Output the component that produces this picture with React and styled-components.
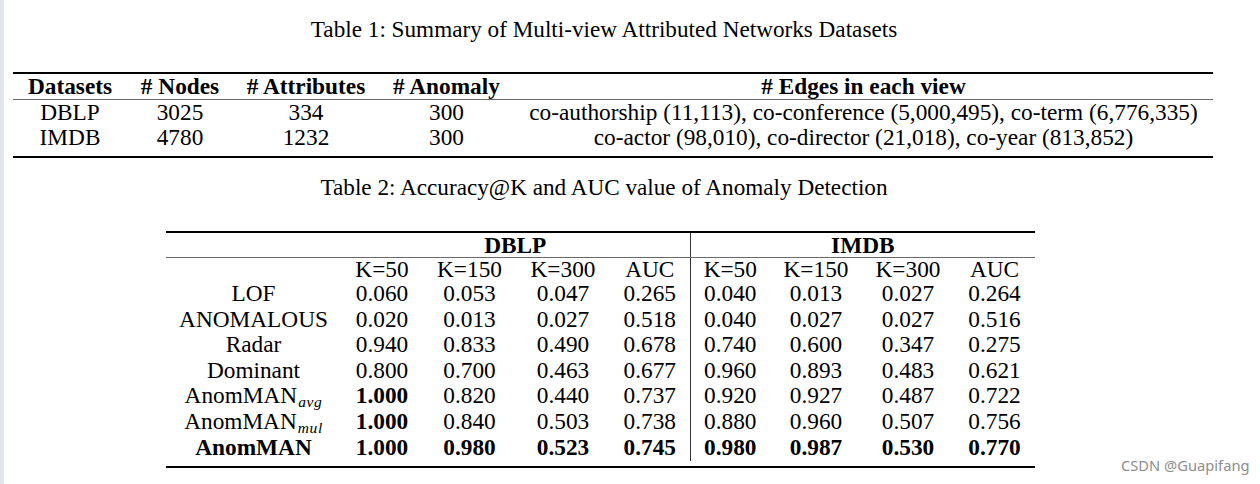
import React from "react";
import styled, { createGlobalStyle } from "styled-components";

const Global = createGlobalStyle`
  html, body { margin: 0; padding: 0; background: #ffffff; }
  body { width: 1260px; height: 484px; overflow: hidden; }
`;

const Page = styled.div`
  position: relative;
  box-sizing: border-box;
  width: 1260px;
  height: 484px;
  border-left: 4px solid #e4e6ed;
  display: flex;
  flex-direction: column;
  font-family: "Liberation Serif", "Times New Roman", serif;
  color: #000;
`;

const Caption = styled.div`
  width: 1200px;
  text-align: center;
  font-size: 23.2px;
  line-height: 24px;
  margin-top: ${(p) => p.$top}px;
`;

const Table = styled.table`
  border-collapse: collapse;
  table-layout: fixed;
  width: ${(p) => p.$width}px;
  margin-left: ${(p) => p.$left}px;
  margin-top: ${(p) => p.$top}px;
  border-top: 2px solid #000;
  border-bottom: 2px solid #000;
  font-size: 23.3px;
`;

const Th = styled.th`
  padding: 0;
  height: ${(p) => p.$h || 25}px;
  line-height: ${(p) => p.$h || 25}px;
  font-weight: 700;
  text-align: center;
  white-space: nowrap;
  border-bottom: 1px solid #6a6a6a;
  border-left: ${(p) => (p.$vline ? "1px solid #333" : "none")};
`;

const Td = styled.td`
  padding: 0 0 ${(p) => p.$pb || 0}px 0;
  height: ${(p) => p.$h || 25}px;
  line-height: ${(p) => p.$h || 25}px;
  text-align: center;
  vertical-align: top;
  white-space: nowrap;
  font-weight: ${(p) => (p.$bold ? 700 : 400)};
  border-left: ${(p) => (p.$vline ? "1px solid #333" : "none")};
`;

const Sub = styled.span`
  display: inline-block;
  font-style: italic;
  font-size: 15.5px;
  line-height: 14px;
  vertical-align: -4px;
  letter-spacing: 0.6px;
  margin-left: 1px;
`;

const Watermark = styled.div`
  position: absolute;
  left: 1117px;
  top: 455px;
  font-family: "Noto Sans", "Open Sans", sans-serif;
  font-size: 14.7px;
  line-height: 20px;
  color: #8e8e8e;
  white-space: nowrap;
`;

const t1Cols = [114, 106, 146, 135, 699];
const t1Head = ["Datasets", "# Nodes", "# Attributes", "# Anomaly", "# Edges in each view"];
const t1Rows = [
  ["DBLP", "3025", "334", "300", "co-authorship (11,113), co-conference (5,000,495), co-term (6,776,335)"],
  ["IMDB", "4780", "1232", "300", "co-actor (98,010), co-director (21,018), co-year (813,852)"],
];

const t2Cols = [175, 82, 93, 94, 80, 80, 92, 92, 81];
const kHead = ["K=50", "K=150", "K=300", "AUC"];
const t2Rows = [
  { name: "LOF", v: ["0.060", "0.053", "0.047", "0.265", "0.040", "0.013", "0.027", "0.264"] },
  { name: "ANOMALOUS", v: ["0.020", "0.013", "0.027", "0.518", "0.040", "0.027", "0.027", "0.516"] },
  { name: "Radar", v: ["0.940", "0.833", "0.490", "0.678", "0.740", "0.600", "0.347", "0.275"] },
  { name: "Dominant", v: ["0.800", "0.700", "0.463", "0.677", "0.960", "0.893", "0.483", "0.621"] },
  { name: "AnomMAN", sub: "avg", v: ["1.000", "0.820", "0.440", "0.737", "0.920", "0.927", "0.487", "0.722"], b: [0] },
  { name: "AnomMAN", sub: "mul", v: ["1.000", "0.840", "0.503", "0.738", "0.880", "0.960", "0.507", "0.756"], b: [0] },
  { name: "AnomMAN", v: ["1.000", "0.980", "0.523", "0.745", "0.980", "0.987", "0.530", "0.770"], all: true },
];

export default function App() {
  return (
    <>
      <Global />
      <Page>
        <Caption $top={17}>Table 1: Summary of Multi-view Attributed Networks Datasets</Caption>
        <Table $width={1200} $left={9} $top={31}>
          <colgroup>
            {t1Cols.map((w, i) => (
              <col key={i} style={{ width: w }} />
            ))}
          </colgroup>
          <thead>
            <tr>
              {t1Head.map((h) => (
                <Th key={h}>{h}</Th>
              ))}
            </tr>
          </thead>
          <tbody>
            {t1Rows.map((r, ri) => (
              <tr key={ri}>
                {r.map((c, ci) => (
                  <Td key={ci} $pb={ri === t1Rows.length - 1 ? 6 : 0}>
                    {c}
                  </Td>
                ))}
              </tr>
            ))}
          </tbody>
        </Table>
        <Caption $top={17}>Table 2: Accuracy@K and AUC value of Anomaly Detection</Caption>
        <Table $width={869} $left={162} $top={32}>
          <colgroup>
            {t2Cols.map((w, i) => (
              <col key={i} style={{ width: w }} />
            ))}
          </colgroup>
          <thead>
            <tr>
              <Th $h={24} />
              <Th $h={24} colSpan={4}>DBLP</Th>
              <Th $h={24} colSpan={4} $vline>IMDB</Th>
            </tr>
          </thead>
          <tbody>
            <tr>
              <Td $h={23} />
              {kHead.map((k) => (
                <Td key={"d" + k} $h={23}>{k}</Td>
              ))}
              {kHead.map((k, i) => (
                <Td key={"i" + k} $h={23} $vline={i === 0}>{k}</Td>
              ))}
            </tr>
            {t2Rows.map((r, ri) => (
              <tr key={ri}>
                <Td $h={25.5} $bold={r.all}>
                  {r.name}
                  {r.sub && <Sub>{r.sub}</Sub>}
                </Td>
                {r.v.map((v, vi) => (
                  <Td
                    key={vi}
                    $h={25.5}
                    $vline={vi === 4}
                    $bold={r.all || (r.b && r.b.includes(vi))}
                  >
                    {v}
                  </Td>
                ))}
              </tr>
            ))}
            <tr>
              {t2Cols.map((w, i) => (
                <Td key={i} $h={5} />
              ))}
            </tr>
          </tbody>
        </Table>
        <Watermark>CSDN @Guapifang</Watermark>
      </Page>
    </>
  );
}
